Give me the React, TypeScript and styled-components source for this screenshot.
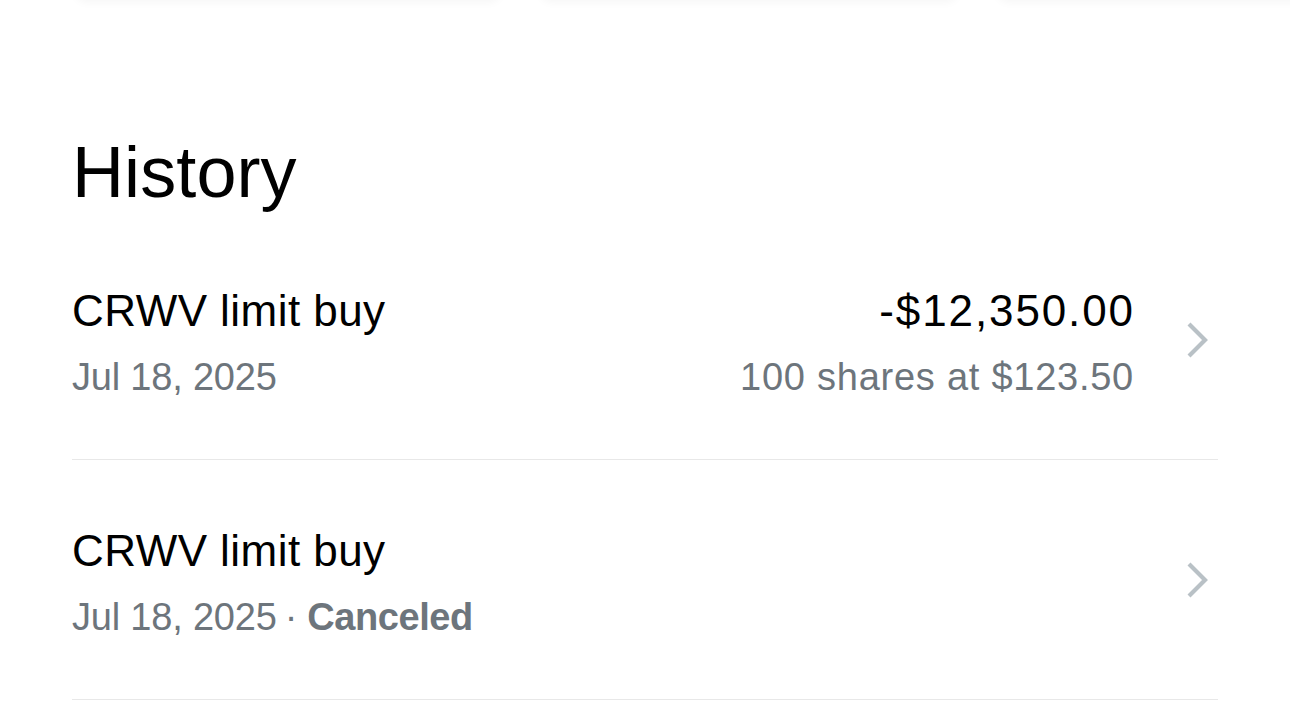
import React from "react";
import styled, {createGlobalStyle} from "styled-components";

const GlobalStyle = createGlobalStyle`
  html, body {
    margin: 0;
    padding: 0;
    background: #ffffff;
    overflow: hidden;
  }
  body {
    font-family: "Liberation Sans", Arial, sans-serif;
    color: #000;
  }
`

const Page = styled.div`
  width: 1290px;
  height: 707px;
  overflow: hidden;
`

const CardStrip = styled.div`
  display: flex;
  gap: 37px;
  padding-left: 74px;
  margin-top: -60px;
`

const StripCard = styled.div<{ $w: number }>`
  flex: 0 0 ${p => p.$w}px;
  height: 60px;
  border-radius: 14px;
  background: #fff;
  box-shadow: 0 3px 8px rgba(0, 0, 0, 0.035);
`

const Section = styled.section`
  padding: 0 72px;
`

const Heading = styled.h2`
  margin: 132px 0 8px;
  font-size: 72px;
  line-height: 80px;
  font-weight: 400;
  letter-spacing: 0.1px;
`

const Row = styled.div`
  display: flex;
  align-items: center;
  height: 240px;
  padding-top: 4px;
  box-sizing: border-box;
  border-bottom: 1px solid #e8e8e8;
`

const Column = styled.div<{ $right?: boolean }>`
  display: flex;
  flex-direction: column;
  align-items: ${p => (p.$right ? "flex-end" : "flex-start")};
  flex: ${p => (p.$right ? "0 0 auto" : "1 1 auto")};
`

const Title = styled.div`
  font-size: 44px;
  line-height: 56px;
  letter-spacing: 0.45px;
  white-space: nowrap;
`

const Amount = styled(Title)`
  letter-spacing: 1.9px;
  margin-right: -2px;
`

const Sub = styled.div`
  margin-top: 14px;
  font-size: 38px;
  line-height: 48px;
  color: #6d757c;
  letter-spacing: -0.2px;
  white-space: nowrap;
`

const Shares = styled(Sub)`
  letter-spacing: 0.75px;
  margin-right: -1px;
`

const Status = styled.span`
  font-weight: 700;
  letter-spacing: -0.4px;
`

const Dot = styled.span`
  margin: 0 10px 0 8px;
`

const ChevronBox = styled.div`
  flex: 0 0 38px;
  margin-left: 47px;
  margin-top: -4px;
  display: flex;
  align-items: center;
  justify-content: center;
`

function Chevron() {
  return (
    <ChevronBox>
      <svg width="38" height="40" viewBox="0 0 38 40">
        <path d="M9 4 L25 20 L9 36" fill="none" stroke="#b9c1c6" strokeWidth="4.2" />
      </svg>
    </ChevronBox>
  )
}

export default function App() {
  return (
    <Page>
      <GlobalStyle />
      <CardStrip>
        <StripCard $w={428} />
        <StripCard $w={420} />
        <StripCard $w={320} />
      </CardStrip>
      <Section>
        <Heading>History</Heading>
        <Row>
          <Column>
            <Title>CRWV limit buy</Title>
            <Sub>Jul 18, 2025</Sub>
          </Column>
          <Column $right>
            <Amount>-$12,350.00</Amount>
            <Shares>100 shares at $123.50</Shares>
          </Column>
          <Chevron />
        </Row>
        <Row>
          <Column>
            <Title>CRWV limit buy</Title>
            <Sub>
              Jul 18, 2025<Dot>·</Dot><Status>Canceled</Status>
            </Sub>
          </Column>
          <Chevron />
        </Row>
      </Section>
    </Page>
  )
}
